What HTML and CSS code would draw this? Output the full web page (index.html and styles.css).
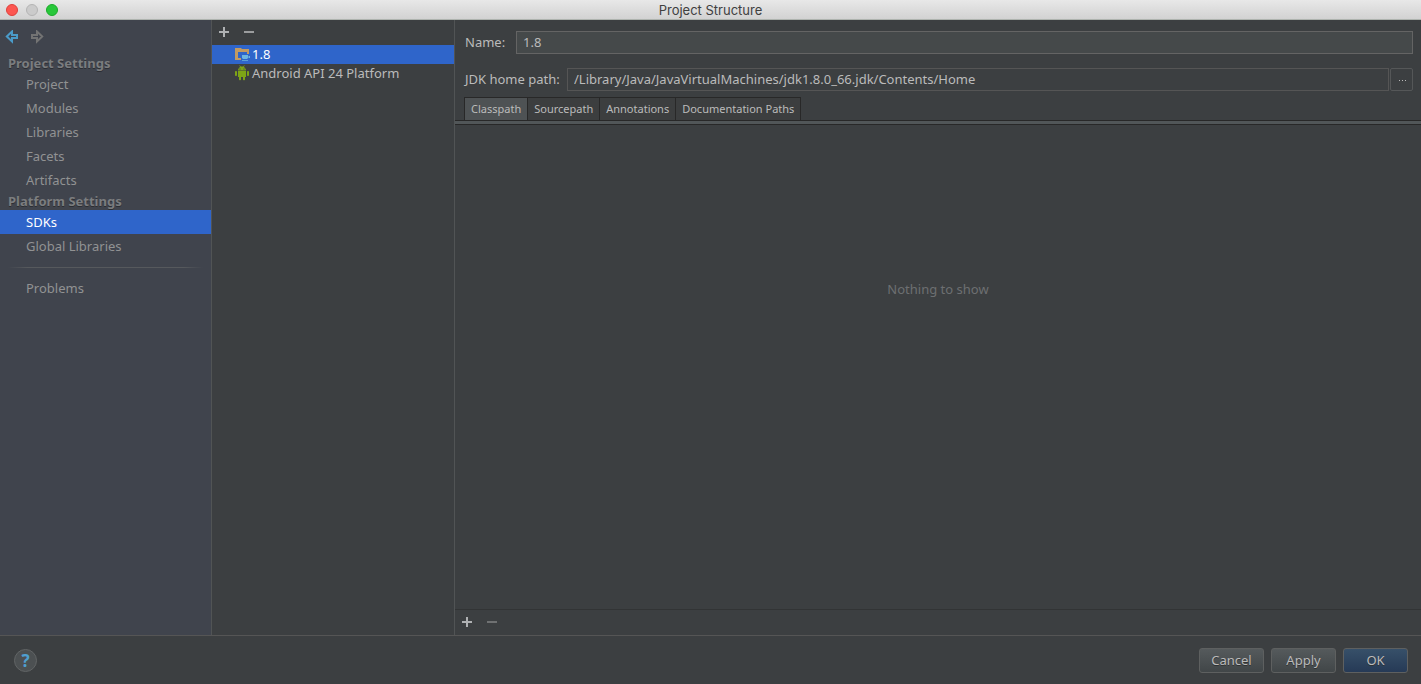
FILE: index.html
```
<!DOCTYPE html>
<html lang="en">
<head>
<meta charset="utf-8">
<title>Project Structure</title>
<link rel="stylesheet" href="styles.css">
</head>
<body>
<div class="window">
  <header class="titlebar">
    <div class="lights">
      <button class="light close" aria-label="Close"></button>
      <button class="light minimize" aria-label="Minimize"></button>
      <button class="light zoom" aria-label="Zoom"></button>
    </div>
    <h1 class="title">Project Structure</h1>
  </header>

  <main class="content">
    <nav class="sidebar">
      <div class="history">
        <button class="icon-button back" aria-label="Back">
          <svg width="14" height="14" viewBox="0 0 14 14"><path d="M1.800 6.500 7 1.500V5h5v3H7v3.500z" fill="none" stroke="currentColor" stroke-width="2"/></svg>
        </button>
        <button class="icon-button forward" aria-label="Forward">
          <svg width="14" height="14" viewBox="0 0 14 14"><path d="M12.200 6.500 7 1.500V5H2v3h5v3.500z" fill="none" stroke="currentColor" stroke-width="2"/></svg>
        </button>
      </div>
      <h2 class="group">Project Settings</h2>
      <a class="item" href="#project">Project</a>
      <a class="item" href="#modules">Modules</a>
      <a class="item" href="#libraries">Libraries</a>
      <a class="item" href="#facets">Facets</a>
      <a class="item" href="#artifacts">Artifacts</a>
      <h2 class="group">Platform Settings</h2>
      <a class="item selected" href="#sdks" aria-current="page">SDKs</a>
      <a class="item" href="#global">Global Libraries</a>
      <hr class="divider">
      <a class="item" href="#problems">Problems</a>
    </nav>

    <section class="sdk-list">
      <div class="toolbar">
        <button class="icon-button" aria-label="Add SDK"><svg width="10" height="10" viewBox="0 0 10 10"><path d="M4 0h2v4h4v2H6v4H4V6H0V4h4z" fill="#afb1b3"/></svg></button>
        <button class="icon-button" aria-label="Remove SDK"><svg width="10" height="10" viewBox="0 0 10 10"><path d="M0 4h10v2H0z" fill="#9b9d9e"/></svg></button>
      </div>
      <a class="sdk selected" href="#jdk">
        <svg width="16" height="16" viewBox="0 0 16 16">
          <path d="M1 2h6l1 1h7v5h-2V6H4v6h3v2H1z" fill="#c29a61"/>
          <path d="M8 9h6v1h2v2h-2l-1 1H9l-1-1zM14 10.500v1h1v-1z" fill="#6db5e2" fill-rule="evenodd"/>
          <path d="M8 14h6v1H8z" fill="#5a9fd8"/>
        </svg>
        <span>1.8</span>
      </a>
      <a class="sdk" href="#android">
        <svg width="16" height="16" viewBox="0 0 16 16">
          <path d="M4 5.4C4 3.800 5 2.500 6.200 1.900L5.300.6l.5-.4 1 1.400c.8-.2 1.600-.2 2.400 0l1-1.400.5.4-.9 1.300C11 2.500 12 3.800 12 5.400z" fill="#7ea416"/>
          <path d="M4 6h8v6H4zM1 7c0-1.300 2-1.300 2 0v3c0 1.300-2 1.300-2 0zM13 7c0-1.300 2-1.300 2 0v3c0 1.300-2 1.300-2 0zM5 12h2v2.500c0 1-2 1-2 0zM9 12h2v2.500c0 1-2 1-2 0z" fill="#7ea416"/>
          <path d="M5.500 3.400h1v1h-1zM9.500 3.400h1v1h-1z" fill="#3c3f41"/>
        </svg>
        <span>Android API 24 Platform</span>
      </a>
    </section>

    <section class="details">
      <div class="field name-field">
        <label for="name">Name:</label>
        <input id="name" class="text name" type="text" value="1.8">
      </div>
      <div class="field path-field">
        <label for="path">JDK home path:</label>
        <input id="path" class="text path" type="text" value="/Library/Java/JavaVirtualMachines/jdk1.8.0_66.jdk/Contents/Home" readonly>
        <button class="browse" aria-label="Browse"><svg width="9" height="3" viewBox="0 0 9 3"><path d="M1 1h1v1H1zM4 1h1v1H4zM7 1h1v1H7z" fill="#bbbbbb"/></svg></button>
      </div>
      <div class="tabs" role="tablist">
        <button class="tab active" role="tab" aria-selected="true">Classpath</button>
        <button class="tab" role="tab">Sourcepath</button>
        <button class="tab" role="tab">Annotations</button>
        <button class="tab" role="tab">Documentation Paths</button>
      </div>
      <div class="tab-strip"></div>
      <div class="empty">Nothing to show</div>
      <div class="toolbar bottom">
        <button class="icon-button" aria-label="Add path"><svg width="10" height="10" viewBox="0 0 10 10"><path d="M4 0h2v4h4v2H6v4H4V6H0V4h4z" fill="#afb1b3"/></svg></button>
        <button class="icon-button" aria-label="Remove path" disabled><svg width="10" height="10" viewBox="0 0 10 10"><path d="M0 4h10v2H0z" fill="#6f7172"/></svg></button>
      </div>
    </section>
  </main>

  <footer class="footer">
    <button class="help" aria-label="Help">?</button>
    <div class="actions">
      <button class="action">Cancel</button>
      <button class="action">Apply</button>
      <button class="action primary">OK</button>
    </div>
  </footer>
</div>
</body>
</html>
```
FILE: styles.css
```
* {
  box-sizing: border-box;
}

body {
  margin: 0;
  background: #3c3f41;
  color: #bbbbbb;
  font-family: "Noto Sans", "Open Sans", sans-serif;
  font-size: 13px;
  line-height: 18px;
}

button,
input {
  margin: 0;
  padding: 0;
  color: inherit;
  font: inherit;
}

a {
  color: inherit;
  text-decoration: none;
}

svg {
  display: block;
  flex: none;
}

.window {
  display: flex;
  flex-direction: column;
  min-height: 100vh;
}

.titlebar {
  display: grid;
  grid-template-columns: 1fr auto 1fr;
  align-items: center;
  height: 20px;
  background: linear-gradient(#e8e8e8, #d2d2d2);
  border-bottom: 1px solid #aeb3ae;
}

.lights {
  display: flex;
  gap: 8px;
  padding-left: 6px;
}

.light {
  width: 12px;
  height: 12px;
  border: 1px solid #df403b;
  border-radius: 50%;
  background: #fc5650;
}

.minimize {
  border-color: #b4b4b4;
  background: #cbcbcb;
}

.zoom {
  border-color: #1aab29;
  background: #28c73a;
}

.title {
  margin: 0;
  color: #404040;
  font-family: Inter, sans-serif;
  font-size: 13px;
  font-weight: 400;
  line-height: 18px;
}

.content {
  display: grid;
  grid-template-columns: 212px 243px 1fr;
  flex: 1;
}

.sidebar {
  display: flex;
  flex-direction: column;
  border-right: 1px solid #515455;
  background: #40444d;
  color: #919293;
}

.history {
  display: flex;
  gap: 11px;
  height: 34px;
  padding: 10px 5px 0;
}

.icon-button {
  display: flex;
  align-items: center;
  justify-content: center;
  border: 0;
  background: none;
}

.back,
.forward {
  height: 14px;
}

.back {
  color: #4a9bc9;
}

.forward {
  color: #737373;
}

.group {
  height: 18px;
  margin: 0;
  padding-left: 8px;
  color: #7b7d7f;
  font-size: 13px;
  font-weight: 700;
  line-height: 18px;
  text-shadow: 0 1px 0 #2c2e33;
}

.item {
  height: 24px;
  padding-left: 26px;
  line-height: 24px;
}

.item.selected {
  background: #2f65ca;
  color: #ffffff;
}

.divider {
  height: 1px;
  margin: 9px 8px 8px;
  border: 0;
  background: linear-gradient(90deg, transparent, #56595d 10%, #56595d 90%, transparent);
}

.sdk-list {
  border-right: 1px solid #515455;
}

.toolbar {
  display: flex;
  align-items: center;
  gap: 15px;
  height: 25px;
  padding: 0 0 2px 7px;
}

.sdk {
  display: flex;
  align-items: center;
  gap: 2px;
  height: 19px;
  padding: 0 0 1px 22px;
}

.sdk.selected {
  background: #2f65ca;
  color: #ffffff;
}

.details {
  display: flex;
  flex-direction: column;
  min-width: 0;
}

.field {
  display: flex;
  align-items: center;
  padding: 0 8px 0 10px;
}

.name-field {
  margin-top: 11px;
}

.path-field {
  margin-top: 14px;
}

.field label {
  flex: none;
  padding-bottom: 2px;
}

.name-field label {
  width: 51px;
}

.path-field label {
  width: 102px;
}

.text {
  flex: 1;
  min-width: 0;
  height: 23px;
  padding: 0 6px 2px;
  border: 1px solid #646464;
  outline: 0;
}

.name {
  background: #45494a;
}

.path {
  border-color: #555555;
  background: #3c3f41;
}

.browse {
  display: flex;
  align-items: center;
  justify-content: center;
  width: 23px;
  height: 23px;
  margin-left: 1px;
  padding: 2px 0 0 2px;
  border: 1px solid #555758;
  border-radius: 2px;
  background: #3c3f41;
}

.tabs {
  display: flex;
  height: 23px;
  margin-top: 6px;
  padding-left: 9px;
}

.tab {
  padding: 0 6px;
  border: 1px solid #282828;
  border-width: 1px 1px 0 0;
  background: #3c3e3f;
  font-size: 11px;
  line-height: 22px;
}

.tab.active {
  border-left-width: 1px;
  background: #4e5254;
}

.tab-strip {
  height: 5px;
  border: 1px solid #282828;
  border-width: 1px 0;
  background: #515658;
}

.empty {
  flex: 1;
  padding-top: 155px;
  color: #6d6f71;
  text-align: center;
}

.bottom {
  height: 26px;
  border-top: 1px solid #323435;
}

.footer {
  display: flex;
  align-items: center;
  justify-content: space-between;
  height: 49px;
  padding: 0 13px 0 14px;
  border-top: 1px solid #555555;
}

.help {
  width: 23px;
  height: 23px;
  border: 1px solid #616465;
  border-radius: 50%;
  background: #4c5052;
  color: #4f9fcf;
  font-size: 17px;
  font-weight: 700;
  line-height: 21px;
}

.actions {
  display: flex;
  gap: 7px;
}

.action {
  width: 65px;
  height: 25px;
  border: 1px solid #5e6060;
  border-radius: 3px;
  background: linear-gradient(#555a5c, #414648);
  text-shadow: 0 1px 0 #2f3233;
}

.action.primary {
  background: linear-gradient(#375069, #263a56);
}
```
